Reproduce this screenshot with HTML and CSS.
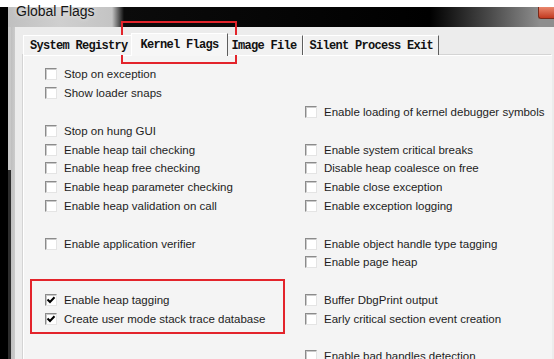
FILE: index.html
```html
<!DOCTYPE html>
<html lang="en">
<head>
  <meta charset="UTF-8" />
  <title>Global Flags</title>
  <link rel="stylesheet" href="styles.css">
</head>
<body>
<div class="screen">
  <div class="titlebar">
    <span class="title">Global Flags</span>
    <span class="close"></span>
  </div>
  <div class="main">
    <div class="console"></div>
    <div class="frame"></div>
    <div class="client">
      <div class="tabs">
        <div class="tab">System Registry</div>
        <div class="tab active">Kernel Flags</div>
        <div class="tab">Image File</div>
        <div class="tab">Silent Process Exit</div>
      </div>
      <div class="panel">
        <div class="options">
          <div class="opt"><span class="box"></span>Stop on exception</div>
          <div></div>
          <div class="opt"><span class="box"></span>Show loader snaps</div>
          <div></div>
          <div></div>
          <div class="opt"><span class="box"></span>Enable loading of kernel debugger symbols</div>
          <div class="opt"><span class="box"></span>Stop on hung GUI</div>
          <div></div>
          <div class="opt"><span class="box"></span>Enable heap tail checking</div>
          <div class="opt"><span class="box"></span>Enable system critical breaks</div>
          <div class="opt"><span class="box"></span>Enable heap free checking</div>
          <div class="opt"><span class="box"></span>Disable heap coalesce on free</div>
          <div class="opt"><span class="box"></span>Enable heap parameter checking</div>
          <div class="opt"><span class="box"></span>Enable close exception</div>
          <div class="opt"><span class="box"></span>Enable heap validation on call</div>
          <div class="opt"><span class="box"></span>Enable exception logging</div>
          <div></div>
          <div></div>
          <div class="opt"><span class="box"></span>Enable application verifier</div>
          <div class="opt"><span class="box"></span>Enable object handle type tagging</div>
          <div></div>
          <div class="opt"><span class="box"></span>Enable page heap</div>
          <div></div>
          <div></div>
          <div class="opt"><span class="box"><svg viewBox="0 0 10 10"><path d="M1.5 4.5 L4 7 L8.5 2.2" /></svg></span>Enable heap tagging</div>
          <div class="opt"><span class="box"></span>Buffer DbgPrint output</div>
          <div class="opt"><span class="box"><svg viewBox="0 0 10 10"><path d="M1.5 4.5 L4 7 L8.5 2.2" /></svg></span>Create user mode stack trace database</div>
          <div class="opt"><span class="box"></span>Early critical section event creation</div>
          <div></div>
          <div></div>
          <div></div>
          <div class="opt"><span class="box"></span>Enable bad handles detection</div>
        </div>
      </div>
    </div>
  </div>
  <div class="mark mark-tab"></div>
  <div class="mark mark-heap"></div>
</div>
</body>
</html>
```

FILE: styles.css
```css
* {
  box-sizing: border-box;
}
body {
  margin: 0;
  background: #000;
}
.screen {
  position: relative;
  width: 554px;
  height: 359px;
  overflow: hidden;
  background: #fff;
  font-family: "Liberation Sans", Arial, sans-serif;
}
.titlebar {
  display: flex;
  height: 27px;
  background:
    linear-gradient(#fff 0 7px, transparent 7px),
    linear-gradient(to right, #000 0 8px, #c0c0c0 8px, #cfcfcf 60px, #c4c4c4 112px, #0b0b0b 124px, #000 430px, #4a4a4a 490px, #8e8e8e 540px);
}
.title {
  padding: 4px 0 0 16px;
  font-size: 14px;
  line-height: 14px;
  color: #151515;
  text-shadow: 0 0 5px rgba(255, 255, 255, 0.7);
}
.close {
  margin: 7px 0 0 auto;
  width: 16px;
  height: 12px;
  background: linear-gradient(#e9876d, #c23a20);
  border-left: 1px solid #7a2a1a;
  border-bottom: 1px solid #7a2a1a;
  border-radius: 0 0 0 3px;
}
.main {
  display: flex;
  height: 332px;
}
.console {
  width: 8px;
  background: #000;
}
.frame {
  width: 7px;
  background:
    linear-gradient(#c8c8c8 143px, #2e2e2e 143px) 0 0 / 3px 100% no-repeat,
    linear-gradient(to right, #b6b6b6, #cbcbcb);
}
.client {
  flex: 1;
  display: flex;
  flex-direction: column;
  padding: 6px 0 0 8px;
  background: #ececec;
}
.tabs {
  display: flex;
  align-items: flex-end;
  height: 22px;
  position: relative;
  z-index: 1;
}
.tab {
  height: 20px;
  padding: 2px 5px 0 6px;
  border-top: 1px solid #fff;
  border-left: 1px solid #fff;
  border-right: 1px solid #5e5e5e;
  background: #f1f1f1;
  font: bold 12px/17px "Liberation Mono", monospace;
  letter-spacing: -0.7px;
  color: #111;
  white-space: nowrap;
}
.tab.active {
  height: 23px;
  margin: 0 -3px -1px;
  padding: 3px 8px 0 9px;
  background: #f6f6f6;
  position: relative;
}
.panel {
  flex: 1;
  margin-right: 2px;
  padding: 9px 0 0 21px;
  background: #f4f4f4;
  border-top: 1px solid #fff;
  border-left: 1px solid #fff;
  box-shadow: -1px -1px 0 #d4d4d4;
}
.options {
  display: grid;
  grid-template-columns: 260px 242px;
  grid-auto-rows: 18.8px;
}
.opt {
  display: flex;
  align-items: center;
  gap: 7px;
  font-size: 11.5px;
  line-height: 14px;
  color: #1d1d1d;
  white-space: nowrap;
  overflow: hidden;
}
.box {
  flex: none;
  width: 12px;
  height: 12px;
  background: #fff;
  border: 1px solid;
  border-color: #8b8b8b #e4e4e4 #e4e4e4 #8b8b8b;
  box-shadow: inset 1px 1px 0 #cacaca;
}
.box svg {
  display: block;
  width: 10px;
  height: 10px;
}
.box path {
  fill: none;
  stroke: #000;
  stroke-width: 2;
}
.mark {
  position: absolute;
  border: 2px solid #e3242b;
}
.mark-tab {
  left: 121px;
  top: 21px;
  width: 116px;
  height: 43px;
}
.mark-heap {
  left: 30px;
  top: 279px;
  width: 255px;
  height: 55px;
}
```
